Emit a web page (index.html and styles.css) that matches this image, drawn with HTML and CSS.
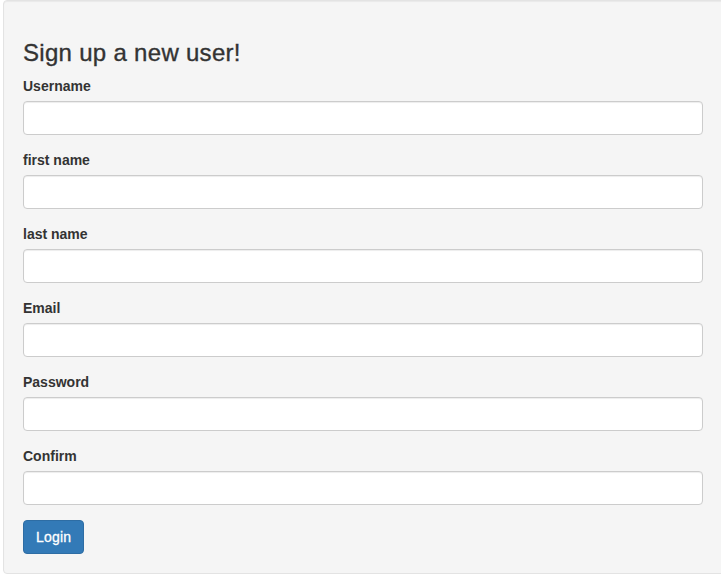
FILE: index.html
```html
<!DOCTYPE html>
<html lang="en">
<head>
<meta charset="utf-8">
<title>Sign up</title>
<link rel="stylesheet" href="styles.css">
</head>
<body>
<div class="well">
  <form class="form">
    <h3 class="title">Sign up a new user!</h3>
    <div class="form-group">
      <label class="label" for="username">Username</label>
      <input class="form-control" id="username" type="text">
    </div>
    <div class="form-group">
      <label class="label" for="first">first name</label>
      <input class="form-control" id="first" type="text">
    </div>
    <div class="form-group">
      <label class="label" for="last">last name</label>
      <input class="form-control" id="last" type="text">
    </div>
    <div class="form-group">
      <label class="label" for="email">Email</label>
      <input class="form-control" id="email" type="email">
    </div>
    <div class="form-group">
      <label class="label" for="password">Password</label>
      <input class="form-control" id="password" type="password">
    </div>
    <div class="form-group">
      <label class="label" for="confirm">Confirm</label>
      <input class="form-control" id="confirm" type="password">
    </div>
    <button class="btn btn-primary" type="submit">Login</button>
  </form>
</div>
</body>
</html>
```

FILE: styles.css
```css
* { box-sizing: border-box; }
html, body { margin: 0; padding: 0; }
body {
  font-family: "Liberation Sans", Arial, sans-serif;
  font-size: 14px;
  line-height: 1.42857143;
  color: #333;
  background: #fff;
  overflow: hidden;
}
.well {
  margin-left: 3px;
  width: 722px;
  min-height: 20px;
  padding: 19px;
  background-color: #f5f5f5;
  border: 1px solid #e3e3e3;
  border-radius: 4px;
  box-shadow: inset 0 1px 1px rgba(0,0,0,.05);
}
.form { margin: 0; }
.title {
  margin: 20px 0 10px;
  font-size: 24px;
  font-weight: 500;
  line-height: 1.1;
  letter-spacing: 0.3px;
  -webkit-text-stroke: 0.35px #333;
  color: #333;
}
.form-group { margin-bottom: 15px; }
.label {
  display: inline-block;
  max-width: 100%;
  margin-bottom: 5px;
  font-weight: bold;
}
.form-control {
  display: block;
  width: 680px;
  height: 34px;
  padding: 6px 12px;
  font-family: inherit;
  font-size: 14px;
  line-height: 1.42857143;
  color: #555;
  background-color: #fff;
  border: 1px solid #ccc;
  border-radius: 4px;
  box-shadow: inset 0 1px 1px rgba(0,0,0,.075);
  margin: 0;
}
.btn {
  display: inline-block;
  margin: 0;
  padding: 6px 12px;
  font-family: inherit;
  font-size: 14px;
  font-weight: normal;
  line-height: 1.42857143;
  text-align: center;
  white-space: nowrap;
  vertical-align: middle;
  cursor: pointer;
  border: 1px solid transparent;
  border-radius: 4px;
  height: 34px;
}
.btn-primary {
  color: #fff;
  background-color: #337ab7;
  border-color: #2e6da4;
  -webkit-text-stroke: 0.3px #fff;
  letter-spacing: 0.2px;
}
```
